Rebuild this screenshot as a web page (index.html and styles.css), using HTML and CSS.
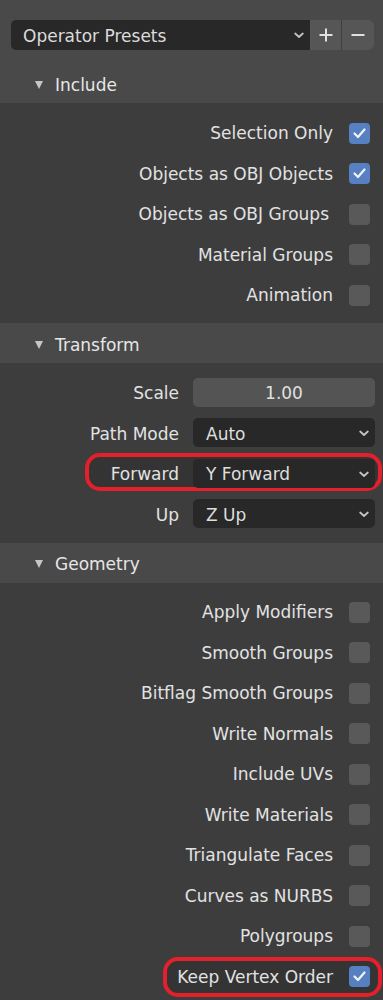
FILE: index.html
```html
<!DOCTYPE html>
<html>
<head>
<meta charset="utf-8">
<link rel="stylesheet" href="styles.css">
</head>
<body>
<div class="panel">
  <div class="top">
    <div class="presets">
      <div class="preset-select">
        <span>Operator Presets</span>
        <svg class="chev" width="10" height="7" viewBox="0 0 10 7"><polyline points="1.2,1.5 5,5 8.8,1.5" fill="none" stroke="#c4c4c4" stroke-width="1.8" stroke-linecap="round" stroke-linejoin="round"/></svg>
      </div>
      <div class="pbtn pbtn-plus"><svg width="16" height="16" viewBox="0 0 16 16"><path d="M8 1.5v13M1.5 8h13" stroke="#e0e0e0" stroke-width="2" fill="none"/></svg></div>
      <div class="pbtn pbtn-minus"><svg width="16" height="16" viewBox="0 0 16 16"><path d="M1.5 8h13" stroke="#e0e0e0" stroke-width="2" fill="none"/></svg></div>
    </div>
  </div>

  <div class="header"><span class="tri"></span><span>Include</span></div>
  <div class="body">
    <div class="crow"><span>Selection Only</span><span class="cb on"><svg width="21" height="21" viewBox="0 0 21 21"><polyline points="5.5,10.5 9,14 15.5,6.5" fill="none" stroke="#f2f2f2" stroke-width="2.2" stroke-linecap="round" stroke-linejoin="round"/></svg></span></div>
    <div class="crow"><span>Objects as OBJ Objects</span><span class="cb on"><svg width="21" height="21" viewBox="0 0 21 21"><polyline points="5.5,10.5 9,14 15.5,6.5" fill="none" stroke="#f2f2f2" stroke-width="2.2" stroke-linecap="round" stroke-linejoin="round"/></svg></span></div>
    <div class="crow"><span class="nudge">Objects as OBJ Groups</span><span class="cb"></span></div>
    <div class="crow"><span>Material Groups</span><span class="cb"></span></div>
    <div class="crow"><span>Animation</span><span class="cb"></span></div>
  </div>

  <div class="header"><span class="tri"></span><span>Transform</span></div>
  <div class="body">
    <div class="frow"><span class="lbl">Scale</span><div class="num">1.00</div></div>
    <div class="frow"><span class="lbl">Path Mode</span><div class="sel"><span>Auto</span><svg class="chev" width="10" height="7" viewBox="0 0 10 7"><polyline points="1.2,1.5 5,5 8.8,1.5" fill="none" stroke="#c4c4c4" stroke-width="1.8" stroke-linecap="round" stroke-linejoin="round"/></svg></div></div>
    <div class="frow mark-row"><span class="mark mark-fwd"></span><span class="lbl">Forward</span><div class="sel"><span>Y Forward</span><svg class="chev" width="10" height="7" viewBox="0 0 10 7"><polyline points="1.2,1.5 5,5 8.8,1.5" fill="none" stroke="#c4c4c4" stroke-width="1.8" stroke-linecap="round" stroke-linejoin="round"/></svg></div></div>
    <div class="frow"><span class="lbl">Up</span><div class="sel"><span>Z Up</span><svg class="chev" width="10" height="7" viewBox="0 0 10 7"><polyline points="1.2,1.5 5,5 8.8,1.5" fill="none" stroke="#c4c4c4" stroke-width="1.8" stroke-linecap="round" stroke-linejoin="round"/></svg></div></div>
  </div>

  <div class="header"><span class="tri"></span><span>Geometry</span></div>
  <div class="body geo">
    <div class="crow"><span>Apply Modifiers</span><span class="cb"></span></div>
    <div class="crow"><span>Smooth Groups</span><span class="cb"></span></div>
    <div class="crow"><span>Bitflag Smooth Groups</span><span class="cb"></span></div>
    <div class="crow"><span>Write Normals</span><span class="cb"></span></div>
    <div class="crow"><span>Include UVs</span><span class="cb"></span></div>
    <div class="crow"><span>Write Materials</span><span class="cb"></span></div>
    <div class="crow"><span>Triangulate Faces</span><span class="cb"></span></div>
    <div class="crow"><span>Curves as NURBS</span><span class="cb"></span></div>
    <div class="crow"><span>Polygroups</span><span class="cb"></span></div>
    <div class="crow mark-row"><span class="mark mark-kvo"></span><span>Keep Vertex Order</span><span class="cb on"><svg width="21" height="21" viewBox="0 0 21 21"><polyline points="5.5,10.5 9,14 15.5,6.5" fill="none" stroke="#f2f2f2" stroke-width="2.2" stroke-linecap="round" stroke-linejoin="round"/></svg></span></div>
  </div>
</div>
</body>
</html>
```

FILE: styles.css
```css
* { box-sizing: border-box; }
html, body { margin: 0; padding: 0; }
body {
  background: #3d3d3d;
  font-family: "DejaVu Sans", "Liberation Sans", sans-serif;
  font-size: 17px;
  color: #e4e4e4;
  width: 383px;
  height: 1000px;
  overflow: hidden;
}
.panel { width: 383px; }
.top {
  background: #494949;
  padding: 20px 9px 13px 11px;
}
.presets {
  display: flex;
  height: 30px;
}
.preset-select {
  flex: 0 0 299px;
  background: #282828;
  border-radius: 5px 0 0 5px;
  display: flex;
  align-items: center;
  justify-content: space-between;
  padding: 1px 6px 0 12px;
  color: #dcdcdc;
}
.pbtn {
  flex: 0 0 32px;
  background: #565656;
  display: flex;
  align-items: center;
  justify-content: center;
}
.pbtn-plus { border-right: 1px solid #3e3e3e; }
.pbtn-minus { border-radius: 0 6px 6px 0; flex-basis: 32px; }
.header {
  background: #494949;
  height: 40px;
  display: flex;
  align-items: center;
  padding-left: 35px;
  padding-top: 3px;
  gap: 12px;
  color: #e6e6e6;
}
.tri {
  width: 0; height: 0;
  border-left: 4.5px solid transparent;
  border-right: 4.5px solid transparent;
  border-top: 8px solid #c6c6c6;
}
.body {
  background: #3d3d3d;
  padding: 9px 0 8.5px;
}
.body.geo { padding-top: 8.5px; padding-bottom: 3.5px; }
.crow {
  height: 40.5px;
  display: flex;
  align-items: center;
  justify-content: flex-end;
  gap: 16px;
  padding-right: 13px;
  padding-top: 2px;
  color: #e2e2e2;
}
.nudge { margin-right: 4px; }
.cb {
  width: 21px; height: 21px;
  border-radius: 4px;
  background: #595959;
  display: block;
}
.cb.on { background: #5680c2; }
.cb svg { display: block; }
.frow {
  height: 40.5px;
  display: grid;
  grid-template-columns: 1fr 182px;
  column-gap: 14px;
  align-items: center;
  padding-right: 8px;
}
.lbl { text-align: right; color: #e2e2e2; padding-top: 2px; }
.num {
  height: 29px;
  background: #545454;
  border-radius: 5px;
  display: flex;
  align-items: center;
  justify-content: center;
  padding-top: 2px;
  color: #e0e0e0;
}
.sel {
  height: 29px;
  background: #282828;
  border-radius: 5px;
  display: flex;
  align-items: center;
  justify-content: space-between;
  padding: 2px 6px 0 13px;
  color: #dedede;
}
.chev { display: block; }
.mark-row { position: relative; }
.mark-row > *:not(.mark) { position: relative; }
.mark {
  position: absolute;
  border: 4px solid #e3202b;
  border-radius: 15px;
  background: rgba(0, 0, 0, 0.14);
}
.mark-fwd { left: 85px; right: 1px; top: 0; height: 38px; }
.mark-kvo { left: 163px; right: 1px; top: 1px; height: 40px; }
```
